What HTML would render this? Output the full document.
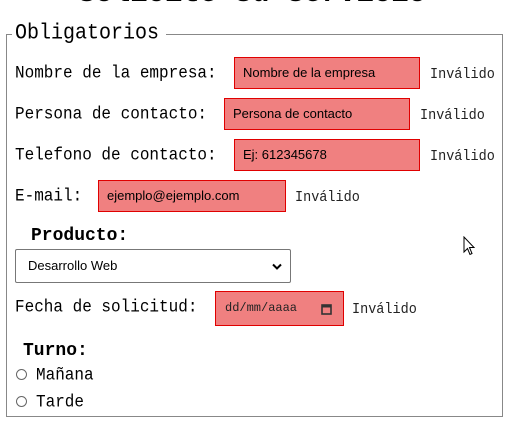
<!DOCTYPE html>
<html><head><meta charset="utf-8"><style>
body{margin:0;width:520px;height:432px;background:#fff;position:relative;overflow:hidden;font-family:"Liberation Mono","DejaVu Sans Mono",monospace;color:#000}
.a{position:absolute;white-space:nowrap}
.lbl{font-size:16px;line-height:20px;transform:scaleY(1.12);transform-origin:left center}
.inp{position:absolute;box-sizing:border-box;background:#f08080;border:1px solid #e00000;font-family:"Liberation Sans",Arial,sans-serif;font-size:13px;line-height:30px;padding-left:8px;color:#000}
.inv{font-size:13.5px;line-height:20px;color:#222;transform:scaleY(1.12);transform-origin:left center;margin-top:3px}
.rad{position:absolute;width:11px;height:11px;border:1px solid #666;border-radius:50%;box-sizing:border-box}
</style></head><body>
<div class="a" style="left:78px;top:-22px;font-size:29px;font-weight:bold;line-height:32px">Solicite su servicio</div>
<div class="a" style="left:6px;top:35px;width:497px;height:382px;border:1px solid #888;border-top:none;box-sizing:border-box"></div>
<div class="a" style="left:6px;top:34px;width:6px;border-top:1px solid #888"></div>
<div class="a" style="left:166px;top:34px;width:337px;border-top:1px solid #888"></div>
<div class="a" style="left:15px;top:22px;font-size:20px;line-height:24px;transform:scaleY(1.12);transform-origin:left center">Obligatorios</div>

<div class="a lbl" style="left:15px;top:63px">Nombre de la empresa:</div>
<div class="inp" style="left:234px;top:57px;width:186px;height:32px">Nombre de la empresa</div>
<div class="a inv" style="left:430px;top:63px">Inválido</div>

<div class="a lbl" style="left:15px;top:104px">Persona de contacto:</div>
<div class="inp" style="left:224px;top:98px;width:186px;height:32px">Persona de contacto</div>
<div class="a inv" style="left:420px;top:104px">Inválido</div>

<div class="a lbl" style="left:15px;top:145px">Telefono de contacto:</div>
<div class="inp" style="left:234px;top:139px;width:186px;height:32px">Ej: 612345678</div>
<div class="a inv" style="left:430px;top:145px">Inválido</div>

<div class="a lbl" style="left:15px;top:186px">E-mail:</div>
<div class="inp" style="left:98px;top:180px;width:188px;height:32px">ejemplo@ejemplo.com</div>
<div class="a inv" style="left:295px;top:186px">Inválido</div>

<div class="a" style="left:31px;top:225px;font-size:18px;font-weight:bold;line-height:22px">Producto:</div>
<div class="a" style="left:15px;top:249px;width:276px;height:34px;box-sizing:border-box;border:1px solid #777;border-radius:2px;font-family:'Liberation Sans',Arial,sans-serif;font-size:13px;line-height:32px;padding-left:12px">Desarrollo Web
<svg style="position:absolute;right:8px;top:13px" width="10" height="7" viewBox="0 0 10 7"><path d="M1 1.5L5 5.5L9 1.5" stroke="#000" stroke-width="2" fill="none"/></svg></div>

<div class="a lbl" style="left:15px;top:297px">Fecha de solicitud:</div>
<div class="inp" style="left:215px;top:291px;width:129px;height:35px;font-family:'Liberation Mono',monospace;font-size:12px;line-height:33px;padding-left:9px;color:#222">dd/mm/aaaa
<svg style="position:absolute;left:105px;top:11px" width="11" height="12" viewBox="0 0 11 12"><rect x="1" y="2" width="9" height="9" fill="none" stroke="#333" stroke-width="1.6"/><rect x="1" y="2" width="9" height="2.5" fill="#333"/></svg></div>
<div class="a inv" style="left:352px;top:298px">Inválido</div>

<div class="a" style="left:23px;top:340px;font-size:18px;font-weight:bold;line-height:22px">Turno:</div>
<div class="rad" style="left:16px;top:369px"></div>
<div class="a lbl" style="left:36px;top:365px">Mañana</div>
<div class="rad" style="left:16px;top:396px"></div>
<div class="a lbl" style="left:36px;top:392px">Tarde</div>

<svg class="a" style="left:463px;top:236px" width="13" height="20" viewBox="0 0 13 20"><path d="M1 1L1 16L4.5 12.5L7 18.5L9 17.5L6.5 11.5L11 11.5Z" fill="#fff" stroke="#000" stroke-width="1"/></svg>
</body></html>
